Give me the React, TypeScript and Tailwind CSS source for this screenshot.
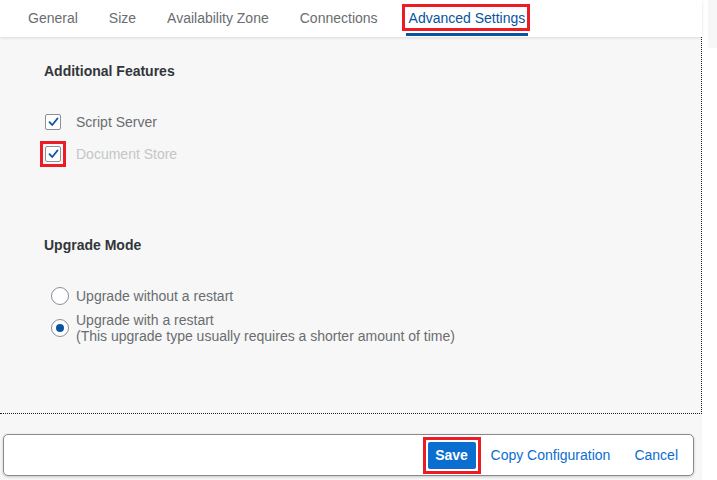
import React from 'react'

const TABS = ['General', 'Size', 'Availability Zone', 'Connections', 'Advanced Settings']

function Checkbox() {
  return (
    <span className="flex h-[16px] w-[16px] items-center justify-center rounded-[2px] border border-[#89919a] bg-white">
      <svg width="11" height="10" viewBox="0 0 11 10" fill="none">
        <path
          d="M1.5 5.2 L4.2 8 L9.5 1.5"
          stroke="#0854a0"
          strokeWidth="1.8"
          strokeLinecap="round"
          strokeLinejoin="round"
        />
      </svg>
    </span>
  )
}

function Radio({ checked }: { checked?: boolean }) {
  return (
    <span className="flex h-[18px] w-[18px] shrink-0 items-center justify-center rounded-full border border-[#89919a] bg-white">
      {checked && <span className="h-[8px] w-[8px] rounded-full bg-[#0854a0]" />}
    </span>
  )
}

export default function App() {
  return (
    <div
      className="flex h-[480px] w-[717px] overflow-hidden bg-white text-[14px]"
      style={{ fontFamily: '"Liberation Sans", Arial, sans-serif' }}
    >
      <div className="flex w-[702px] flex-col bg-[#f7f7f7]">
        {/* Tab bar */}
        <div className="relative z-10 flex h-[37px] shrink-0 items-center gap-[31px] bg-white pl-[28px] shadow-[0_1px_3px_rgba(0,0,0,0.12)]">
          {TABS.map(t =>
            t === 'Advanced Settings' ? (
              <div key={t} className="relative flex h-full items-center">
                <span className="text-[#0854a0]">{t}</span>
                <span className="absolute bottom-[1px] left-[-3px] right-[-3px] h-[3px] bg-[#0854a0]" />
                <span className="absolute left-[-7px] right-[-5px] top-[4px] bottom-[6px] border-[3px] border-[#ed1c24]" />
              </div>
            ) : (
              <span key={t} className="text-[#6a6d70]">{t}</span>
            )
          )}
        </div>

        {/* Content */}
        <div className="h-[377px] shrink-0 border-b border-r border-dotted border-[#222] pl-[44px] pt-[24px]">
          <h2 className="h-[20px] font-bold leading-[20px] text-[#32363a]">Additional Features</h2>

          <div className="mt-[31px] flex h-[20px] items-center">
            <span className="ml-[1px]"><Checkbox /></span>
            <span className="ml-[15px] text-[#6a6d70]">Script Server</span>
          </div>
          <div className="mt-[12px] flex h-[20px] items-center">
            <span className="relative ml-[1px]">
              <Checkbox />
              <span className="absolute left-[-5px] top-[-5px] h-[26px] w-[26px] border-[3px] border-[#ed1c24]" />
            </span>
            <span className="ml-[15px] text-[#c4c6c8]">Document Store</span>
          </div>

          <h2 className="mt-[71px] h-[20px] font-bold leading-[20px] text-[#32363a]">Upgrade Mode</h2>

          <div className="mt-[31px] flex h-[20px] items-center pl-[7px]">
            <Radio />
            <span className="ml-[7px] text-[#6a6d70]">Upgrade without a restart</span>
          </div>
          <div className="mt-[6px] flex items-center pl-[7px]">
            <Radio checked />
            <div className="ml-[7px] leading-[16px] text-[#6a6d70]">
              <div>Upgrade with a restart</div>
              <div>(This upgrade type usually requires a shorter amount of time)</div>
            </div>
          </div>
        </div>

        {/* Footer */}
        <div className="px-[3px] pt-[20px]">
          <div className="flex h-[42px] w-[691px] items-center justify-end rounded-[5px] border border-[#8a8a8a] bg-white pr-[15px] shadow-[0_1px_3px_rgba(0,0,0,0.2)]">
            <div className="border-[3px] border-[#ed1c24] bg-white p-[2px]">
              <button className="h-[27px] w-[48px] rounded-[2px] bg-[#0a6ed1] font-bold text-white">Save</button>
            </div>
            <span className="ml-[10px] text-[#0a6ed1]">Copy Configuration</span>
            <span className="ml-[24px] text-[#0a6ed1]">Cancel</span>
          </div>
        </div>
      </div>

      <div className="w-[15px] pl-[6px]">
        <div className="h-[48px] bg-[#f7f7f7]" />
      </div>
    </div>
  )
}
